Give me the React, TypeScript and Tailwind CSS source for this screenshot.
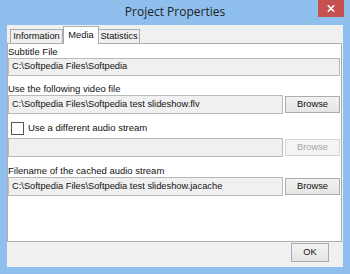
const font = { fontFamily: '"Liberation Sans", Tahoma, sans-serif' };

const Field = ({ value, h = "h-[19px]" }: { value: string; h?: string }) => (
	<div
		className={`flex-1 ${h} border border-[#b9b9b9] bg-[#f0f0f0] flex items-center px-[3px] text-[9.3px] text-[#111] overflow-hidden whitespace-nowrap`}
	>
		{value}
	</div>
);

const Browse = ({ disabled }: { disabled?: boolean }) => (
	<div className="h-[19px] flex items-center ml-[2px]">
		<button
			className={`w-[55px] h-[17px] border text-[9.3px] flex items-center justify-center ${disabled
				? "border-[#d5d5d5] bg-[#f4f4f4] text-[#a6a6a6]"
				: "border-[#acacac] bg-gradient-to-b from-[#f2f2f2] to-[#e5e5e5] text-[#111]"
				}`}
		>
			Browse
		</button>
	</div>
);

const App = () => {
	return (
		<div className="w-[350px] h-[274px] bg-[#8fbfed] flex flex-col" style={font}>
			{/* title bar */}
			<div className="relative h-[25px] flex items-center justify-center">
				<span className="text-[12px] text-[#222] pb-[1px]" style={{ fontFamily: '"Open Sans", sans-serif' }}>
					Project Properties
				</span>
				<div className="absolute right-[6px] top-0 w-[26px] h-[17px] bg-[#c75050] flex items-center justify-center">
					<svg width="8" height="7" viewBox="0 0 8 7">
						<path d="M0.8 0.3 L7.2 6.7 M7.2 0.3 L0.8 6.7" stroke="#fff" strokeWidth="1.6" />
					</svg>
				</div>
			</div>

			{/* client area */}
			<div className="mx-[7px] mb-[7px] flex-1 bg-[#f0f0f0] flex flex-col">
				<div className="flex items-end h-[18px] pl-[3px] text-[9.3px] text-[#111]">
					<div className="w-[53px] h-[14px] border border-[#acacac] border-b-0 bg-[#f0f0f0] flex items-center justify-center">
						Information
					</div>
					<div className="w-[36px] h-[18px] -mb-[1px] border border-[#acacac] border-b-0 bg-white flex items-start justify-center pt-[2px] relative z-10">
						Media
					</div>
					<div className="w-[41px] h-[14px] border border-[#acacac] border-b-0 border-l-0 bg-[#f0f0f0] flex items-center justify-center">
						Statistics
					</div>
				</div>

				<div className="h-[199px] bg-white border border-[#acacac] mr-[1px] pr-[1px] text-[9.5px] text-[#111] flex flex-col">
					<div className="h-[13px] leading-[13px] mt-[1px]">Subtitle File</div>
					<div className="flex">
						<Field value="C:\Softpedia Files\Softpedia" h="h-[18px]" />
					</div>

					<div className="h-[13px] leading-[13px] mt-[6px]">Use the following video file</div>
					<div className="flex">
						<Field value="C:\Softpedia Files\Softpedia test slideshow.flv" />
						<Browse />
					</div>

					<div className="flex items-center mt-[7px] ml-[3px] h-[14px]">
						<div className="w-[13px] h-[13px] border border-[#555] bg-white mr-[4px]" />
						<span>Use a different audio stream</span>
					</div>
					<div className="flex mt-[3px]">
						<Field value="" />
						<Browse disabled />
					</div>

					<div className="h-[13px] leading-[13px] mt-[7px]">Filename of the cached audio stream</div>
					<div className="flex">
						<Field value="C:\Softpedia Files\Softpedia test slideshow.jacache" />
						<Browse />
					</div>
				</div>

				<div className="flex-1 flex items-start justify-end pr-[14px] pt-[1px]">
					<button className="w-[38px] h-[19px] border border-[#acacac] bg-gradient-to-b from-[#f2f2f2] to-[#e5e5e5] text-[9.3px] text-[#111]">
						OK
					</button>
				</div>
			</div>
		</div>
	);
};

export default App;
